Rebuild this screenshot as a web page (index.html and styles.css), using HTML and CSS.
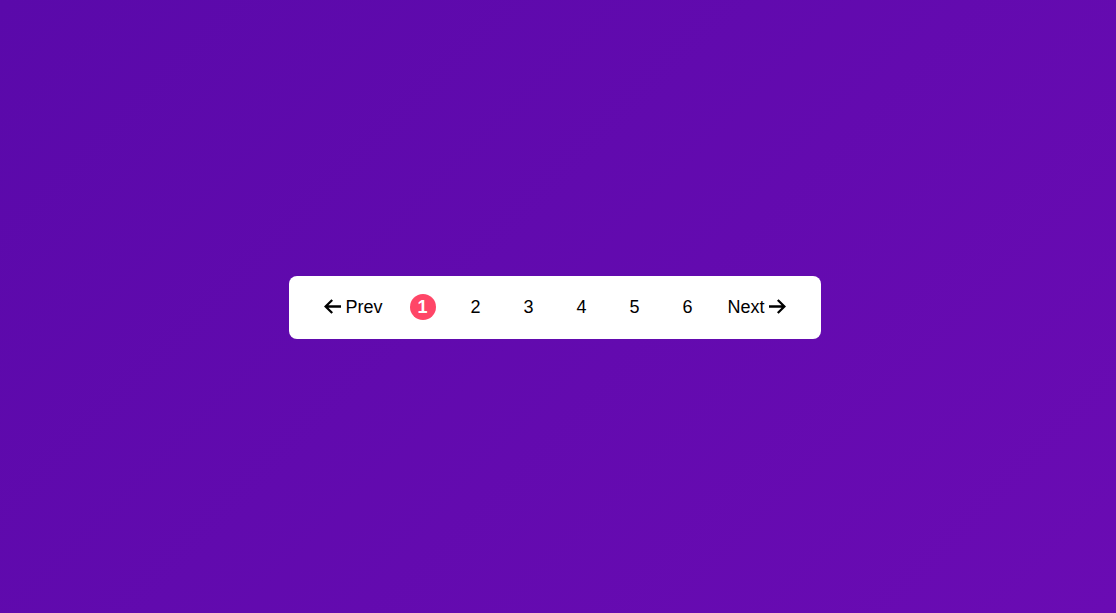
FILE: index.html
```html
<!DOCTYPE html>
<html>
<head>
<meta charset="utf-8">
<link rel="stylesheet" href="styles.css">
</head>
<body>
<div class="page">
  <nav class="pager">
    <a class="nav-link prev"><svg class="arrow" viewBox="0 0 17 15"><path d="M17 7.5H1.5M8.2 1L1.6 7.5 8.2 14"/></svg><span>Prev</span></a>
    <a class="num active">1</a>
    <a class="num">2</a>
    <a class="num">3</a>
    <a class="num">4</a>
    <a class="num">5</a>
    <a class="num">6</a>
    <a class="nav-link next"><span>Next</span><svg class="arrow" viewBox="0 0 17 15"><path d="M0 7.5H15.5M8.8 1L15.4 7.5 8.8 14"/></svg></a>
  </nav>
</div>
</body>
</html>
```
FILE: styles.css
```css
html, body {
  margin: 0;
  height: 100%;
}
body {
  background: linear-gradient(135deg, #5a09aa 0%, #6a0bb3 100%);
  font-family: "Liberation Sans", Arial, sans-serif;
}
.page {
  height: 100%;
  display: flex;
  align-items: center;
  justify-content: center;
  padding-right: 6px;
  padding-top: 1px;
  box-sizing: border-box;
}
.pager {
  background: #fff;
  border-radius: 8px;
  display: flex;
  align-items: center;
  gap: 27px;
  padding: 18px 35px 19px 35px;
}
.nav-link {
  display: flex;
  align-items: center;
  gap: 4px;
  font-size: 18px;
  color: #000;
  height: 26px;
  box-sizing: border-box;
  padding-top: 2px;
}
.arrow {
  width: 17px;
  height: 15px;
  fill: none;
  stroke: #000;
  stroke-width: 2.3;
  margin-top: -2px;
}
.num {
  width: 26px;
  height: 26px;
  border-radius: 50%;
  display: flex;
  align-items: center;
  justify-content: center;
  font-size: 18px;
  color: #000;
  box-sizing: border-box;
  padding-top: 2px;
}
.num.active {
  background: #ff4667;
  color: #fff;
  font-weight: bold;
}
```
